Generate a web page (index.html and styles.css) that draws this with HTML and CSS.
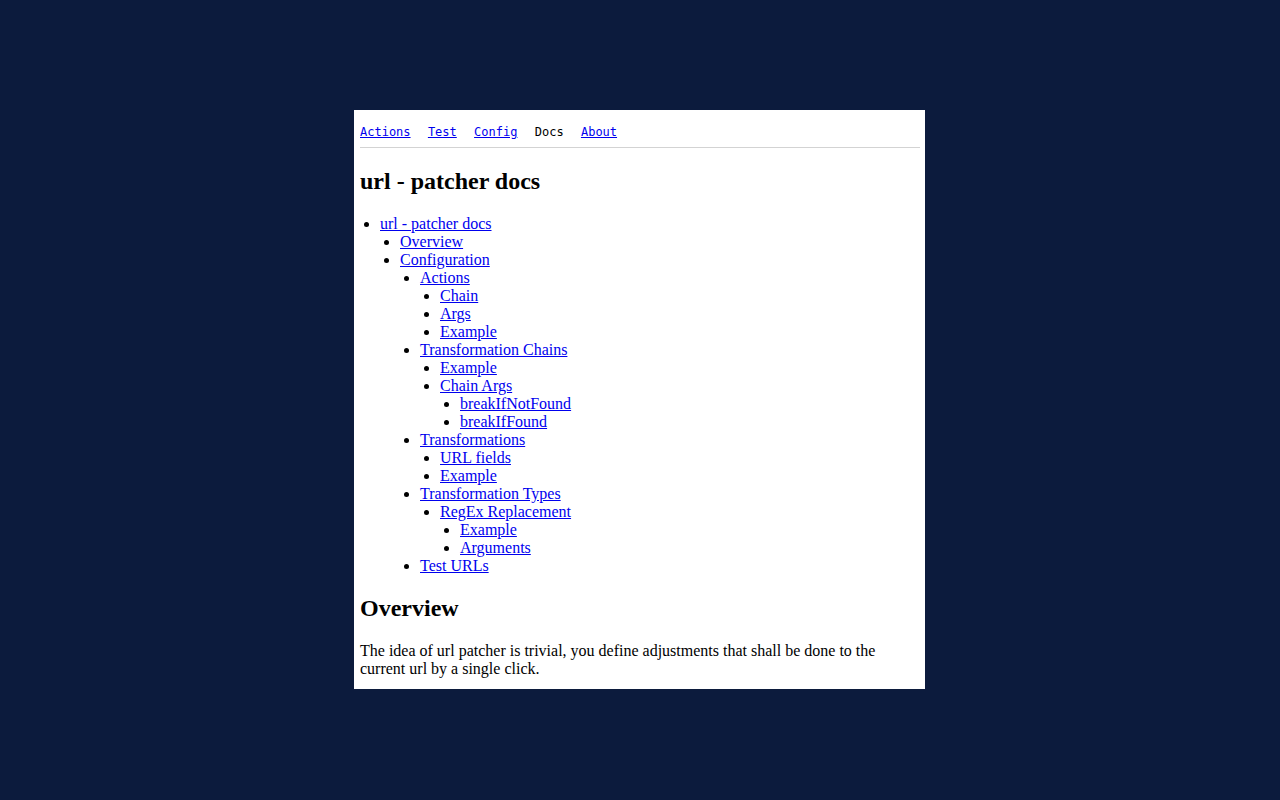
FILE: index.html
```html
<!DOCTYPE html>
<html>
<head>
<meta charset="utf-8">
<title>url - patcher docs</title>
<link rel="stylesheet" href="styles.css">
</head>
<body>
<div class="panel">
  <nav class="nav">
    <a href="#">Actions</a>
    <a href="#">Test</a>
    <a href="#">Config</a>
    <span class="current">Docs</span>
    <a href="#">About</a>
  </nav>
  <hr class="rule">
  <h2 class="title">url - patcher docs</h2>
  <ul class="toc">
    <li><a href="#">url - patcher docs</a>
      <ul>
        <li><a href="#">Overview</a></li>
        <li><a href="#">Configuration</a>
          <ul>
            <li><a href="#">Actions</a>
              <ul>
                <li><a href="#">Chain</a></li>
                <li><a href="#">Args</a></li>
                <li><a href="#">Example</a></li>
              </ul>
            </li>
            <li><a href="#">Transformation Chains</a>
              <ul>
                <li><a href="#">Example</a></li>
                <li><a href="#">Chain Args</a>
                  <ul>
                    <li><a href="#">breakIfNotFound</a></li>
                    <li><a href="#">breakIfFound</a></li>
                  </ul>
                </li>
              </ul>
            </li>
            <li><a href="#">Transformations</a>
              <ul>
                <li><a href="#">URL fields</a></li>
                <li><a href="#">Example</a></li>
              </ul>
            </li>
            <li><a href="#">Transformation Types</a>
              <ul>
                <li><a href="#">RegEx Replacement</a>
                  <ul>
                    <li><a href="#">Example</a></li>
                    <li><a href="#">Arguments</a></li>
                  </ul>
                </li>
              </ul>
            </li>
            <li><a href="#">Test URLs</a></li>
          </ul>
        </li>
      </ul>
    </li>
  </ul>
  <h2 class="title">Overview</h2>
  <p class="text">The idea of url patcher is trivial, you define adjustments that shall be done to the current url by a single click.</p>
</div>
</body>
</html>
```

FILE: styles.css
```css
html, body {
  margin: 0;
  padding: 0;
  background: #0c1b3d;
}

body {
  padding-top: 110px;
  font-family: "Liberation Serif", "Times New Roman", serif;
  font-size: 16px;
  color: #000;
}

.panel {
  box-sizing: border-box;
  width: 571px;
  height: 579px;
  margin-left: calc(50% - 286px);
  padding: 15px 5px 0 6px;
  background: #fff;
  overflow: hidden;
}

.nav {
  display: flex;
  gap: 17.3px;
  font-family: "DejaVu Sans Mono", monospace;
  font-size: 12px;
}

.nav a {
  color: #0000ee;
  text-decoration: underline;
}

.nav .current {
  color: #000;
}

.rule {
  border: 0;
  border-top: 1px solid #d3d3d3;
  margin: 8px 0;
  height: 0;
}

.title {
  font-size: 24px;
  font-weight: bold;
  margin: 19.92px 0;
}

.toc, .toc ul {
  list-style: disc;
  padding-left: 20px;
}

.toc {
  margin: 16px 0;
}

.toc ul {
  margin: 0;
}

.toc a {
  color: #0000ee;
}

.text {
  margin: 16px 0;
}
```
